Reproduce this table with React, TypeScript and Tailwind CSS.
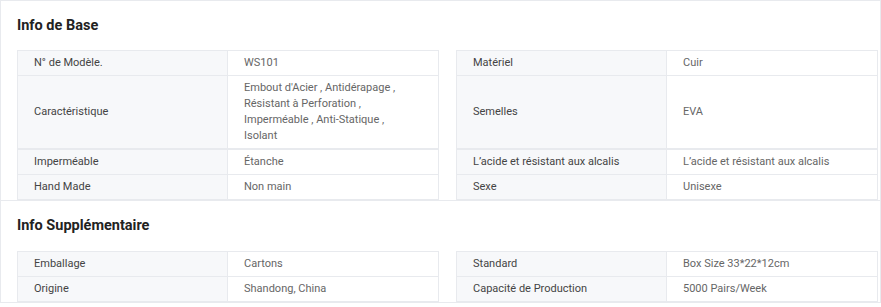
import React from 'react';

type Spec = { label: string; value: string };
type SpecRow = { pair: [Spec, Spec]; tall?: boolean };

const baseInfo: SpecRow[] = [
  {
    pair: [
      { label: 'N° de Modèle.', value: 'WS101' },
      { label: 'Matériel', value: 'Cuir' },
    ],
  },
  {
    tall: true,
    pair: [
      {
        label: 'Caractéristique',
        value:
          "Embout d'Acier , Antidérapage , Résistant à Perforation , Imperméable , Anti-Statique , Isolant",
      },
      { label: 'Semelles', value: 'EVA' },
    ],
  },
  {
    pair: [
      { label: 'Imperméable', value: 'Étanche' },
      { label: 'L’acide et résistant aux alcalis', value: 'L’acide et résistant aux alcalis' },
    ],
  },
  {
    pair: [
      { label: 'Hand Made', value: 'Non main' },
      { label: 'Sexe', value: 'Unisexe' },
    ],
  },
];

const extraInfo: SpecRow[] = [
  {
    pair: [
      { label: 'Emballage', value: 'Cartons' },
      { label: 'Standard', value: 'Box Size 33*22*12cm' },
    ],
  },
  {
    pair: [
      { label: 'Origine', value: 'Shandong, China' },
      { label: 'Capacité de Production', value: '5000 Pairs/Week' },
    ],
  },
];

const SpecCell: React.FC<{ spec: Spec; first: boolean; tall?: boolean }> = ({
  spec,
  first,
  tall,
}) => (
  <div
    className={`grid grid-cols-2 border-x border-[#e8eaee] ${first ? 'border-t' : ''} ${
      tall ? 'border-b-2' : 'border-b'
    }`}
  >
    <div className="flex items-center bg-[#f7f8fa] border-r border-[#e8eaee] pl-4 pr-6 py-1 text-[#444]">
      {spec.label}
    </div>
    <div className="flex items-center pl-4 pr-6 py-1 text-[#666]">{spec.value}</div>
  </div>
);

const SpecSection: React.FC<{ title: string; rows: SpecRow[]; top?: boolean }> = ({
  title,
  rows,
  top,
}) => (
  <section
    className={`border-x border-b border-[#e8eaee] pl-4 pr-[2px] ${top ? 'border-t' : ''}`}
  >
    <h2
      className={`flex items-center text-[14.5px] font-bold text-[#222] ${
        top ? 'h-[49px]' : 'h-[50px]'
      }`}
    >
      {title}
    </h2>
    <div className="text-[11px] leading-4">
      {rows.map((row, i) => (
        <div key={i} className="grid grid-cols-2 gap-x-[17px]">
          <SpecCell spec={row.pair[0]} first={i === 0} tall={row.tall} />
          <SpecCell spec={row.pair[1]} first={i === 0} tall={row.tall} />
        </div>
      ))}
    </div>
  </section>
);

export default function App() {
  return (
    <div
      className="w-[881px] bg-white"
      style={{ fontFamily: 'Roboto, "Liberation Sans", Arial, sans-serif' }}
    >
      <SpecSection title="Info de Base" rows={baseInfo} top />
      <SpecSection title="Info Supplémentaire" rows={extraInfo} />
    </div>
  );
}
